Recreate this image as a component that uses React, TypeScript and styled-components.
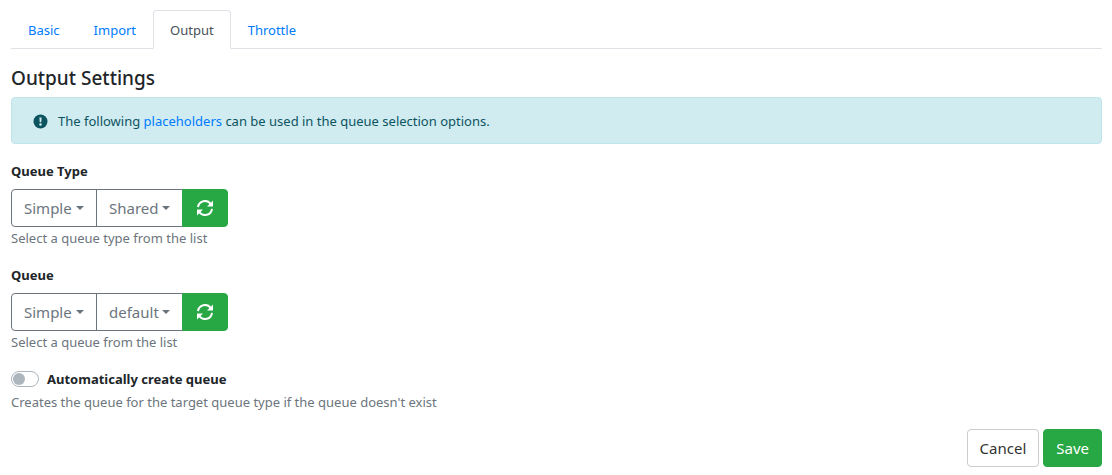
import React from "react";
import styled, { createGlobalStyle } from "styled-components";

const GlobalStyle = createGlobalStyle`
  *, *::before, *::after { box-sizing: border-box; }
  body {
    margin: 0;
    background: #fff;
    color: #212529;
    font-family: "Noto Sans", sans-serif;
    font-size: 13px;
    line-height: 20px;
  }
  button, input, select { font-family: inherit; margin: 0; }
`;

const Page = styled.main`
  padding: 10px 10px 8px 11px;
`;

const Tabs = styled.nav`
  display: flex;
  border-bottom: 1px solid #dee2e6;
  margin-bottom: 16px;
`;

const Tab = styled.a<{ $active?: boolean }>`
  padding: 9px 16px 8px;
  margin-bottom: -1px;
  border: 1px solid transparent;
  border-color: ${(p) => (p.$active ? "#dee2e6 #dee2e6 #fff" : "transparent")};
  border-radius: 4px 4px 0 0;
  background: ${(p) => (p.$active ? "#fff" : "none")};
  color: ${(p) => (p.$active ? "#495057" : "#007bff")};
  text-decoration: none;
`;

const Title = styled.h4`
  margin: 0 0 6px;
  font-size: 19px;
  line-height: 26px;
  font-weight: 500;
`;

const Notice = styled.div`
  display: flex;
  align-items: center;
  gap: 10px;
  padding: 13px 21px 12px;
  margin-bottom: 17px;
  border: 1px solid #bee5eb;
  border-radius: 4px;
  background: #d1ecf1;
  color: #0c5460;
`;

const NoticeText = styled.p`
  margin: 0;
`;

const Link = styled.a`
  color: #007bff;
  text-decoration: none;
`;

const Field = styled.section`
  display: flex;
  flex-direction: column;
  margin-bottom: 17px;
`;

const Label = styled.label`
  font-weight: 700;
`;

const Group = styled.div`
  display: flex;
  margin-top: 8px;
`;

const Help = styled.small`
  margin-top: 1px;
  font-size: 13px;
  color: #6c757d;
`;

const SelectBox = styled.div`
  display: grid;
  grid-template-columns: 1fr auto;
  align-items: center;
  width: 87px;
  height: 38px;
  margin-right: -1px;
  border: 1px solid #6c757d;
  color: #6c757d;
  &:first-child { width: 86px; border-radius: 4px 0 0 4px; }
`;

const Select = styled.select`
  grid-area: 1 / 1 / 2 / 3;
  width: 100%;
  height: 36px;
  padding: 0 0 0 12px;
  border: 0;
  background: none;
  color: inherit;
  font-size: 15px;
  appearance: none;
`;

const CaretIcon = styled.svg`
  grid-area: 1 / 2;
  margin-right: 12px;
  pointer-events: none;
`;

const Button = styled.button<{ $primary?: boolean; $joined?: boolean }>`
  display: flex;
  align-items: center;
  justify-content: center;
  height: 38px;
  padding: 0 12px;
  border: 1px solid ${(p) => (p.$primary ? "#28a745" : "#ccc")};
  border-radius: ${(p) => (p.$joined ? "0 4px 4px 0" : "4px")};
  background: ${(p) => (p.$primary ? "#28a745" : "#fff")};
  color: ${(p) => (p.$primary ? "#fff" : "#333")};
  font-size: 15px;
  ${(p) => p.$joined && "width: 46px;"}
`;

const SwitchRow = styled.div`
  display: flex;
  align-items: center;
  gap: 8px;
  margin-bottom: 2px;
`;

const Switch = styled.input`
  display: flex;
  align-items: center;
  width: 28px;
  height: 16px;
  padding: 0 1px;
  border: 1px solid #adb5bd;
  border-radius: 8px;
  background: #fff;
  appearance: none;
  &::before {
    content: "";
    width: 12px;
    height: 12px;
    border-radius: 50%;
    background: #adb5bd;
  }
  &:checked { justify-content: flex-end; }
`;

const Actions = styled.footer`
  display: flex;
  justify-content: flex-end;
  gap: 4px;
`;

const Caret = () => (
  <CaretIcon width="8" height="4" viewBox="0 0 8 4" aria-hidden="true">
    <path d="M0 0h8L4 4z" fill="currentColor" />
  </CaretIcon>
);

const Refresh = () => (
  <svg width="18" height="18" viewBox="0 0 18 18" fill="none" aria-hidden="true">
    <path d="M2 8.200a7 7 0 0 1 12.700-3.200M16 9.800A7 7 0 0 1 3.300 13" stroke="currentColor" strokeWidth="2" />
    <path d="M17 1.500v6h-6zM1 16.500v-6h6z" fill="currentColor" />
  </svg>
);

const Exclamation = () => (
  <svg width="15" height="15" viewBox="0 0 15 15" aria-hidden="true">
    <circle cx="7.500" cy="7.500" r="7" fill="currentColor" />
    <path d="M6.400 3.500h2.200l-.3 4.800H6.700z" fill="#d1ecf1" />
    <circle cx="7.500" cy="10.500" r="1.200" fill="#d1ecf1" />
  </svg>
);

type QueueFieldProps = { id: string; label: string; help: string; values: string[] };

const QueueField = ({ id, label, help, values }: QueueFieldProps) => (
  <Field>
    <Label htmlFor={`${id}-0`}>{label}</Label>
    <Group>
      {values.map((value, i) => (
        <SelectBox key={value}>
          <Select id={`${id}-${i}`} aria-label={i ? `${label} value` : undefined} defaultValue={value}>
            <option>{value}</option>
          </Select>
          <Caret />
        </SelectBox>
      ))}
      <Button type="button" $primary $joined aria-label="Refresh">
        <Refresh />
      </Button>
    </Group>
    <Help>{help}</Help>
  </Field>
);

export default function App() {
  return (
    <>
      <GlobalStyle />
      <Page>
        <Tabs>
          {["Basic", "Import", "Output", "Throttle"].map((name) => (
            <Tab key={name} href={`#${name.toLowerCase()}`} $active={name === "Output"}>
              {name}
            </Tab>
          ))}
        </Tabs>
        <Title>Output Settings</Title>
        <Notice>
          <Exclamation />
          <NoticeText>
            The following <Link href="#placeholders">placeholders</Link> can be used in the queue selection options.
          </NoticeText>
        </Notice>
        <QueueField id="queue-type" label="Queue Type" help="Select a queue type from the list" values={["Simple", "Shared"]} />
        <QueueField id="queue" label="Queue" help="Select a queue from the list" values={["Simple", "default"]} />
        <Field>
          <SwitchRow>
            <Switch type="checkbox" id="auto-create" />
            <Label htmlFor="auto-create">Automatically create queue</Label>
          </SwitchRow>
          <Help>Creates the queue for the target queue type if the queue doesn't exist</Help>
        </Field>
        <Actions>
          <Button type="button">Cancel</Button>
          <Button type="submit" $primary>Save</Button>
        </Actions>
      </Page>
    </>
  );
}
